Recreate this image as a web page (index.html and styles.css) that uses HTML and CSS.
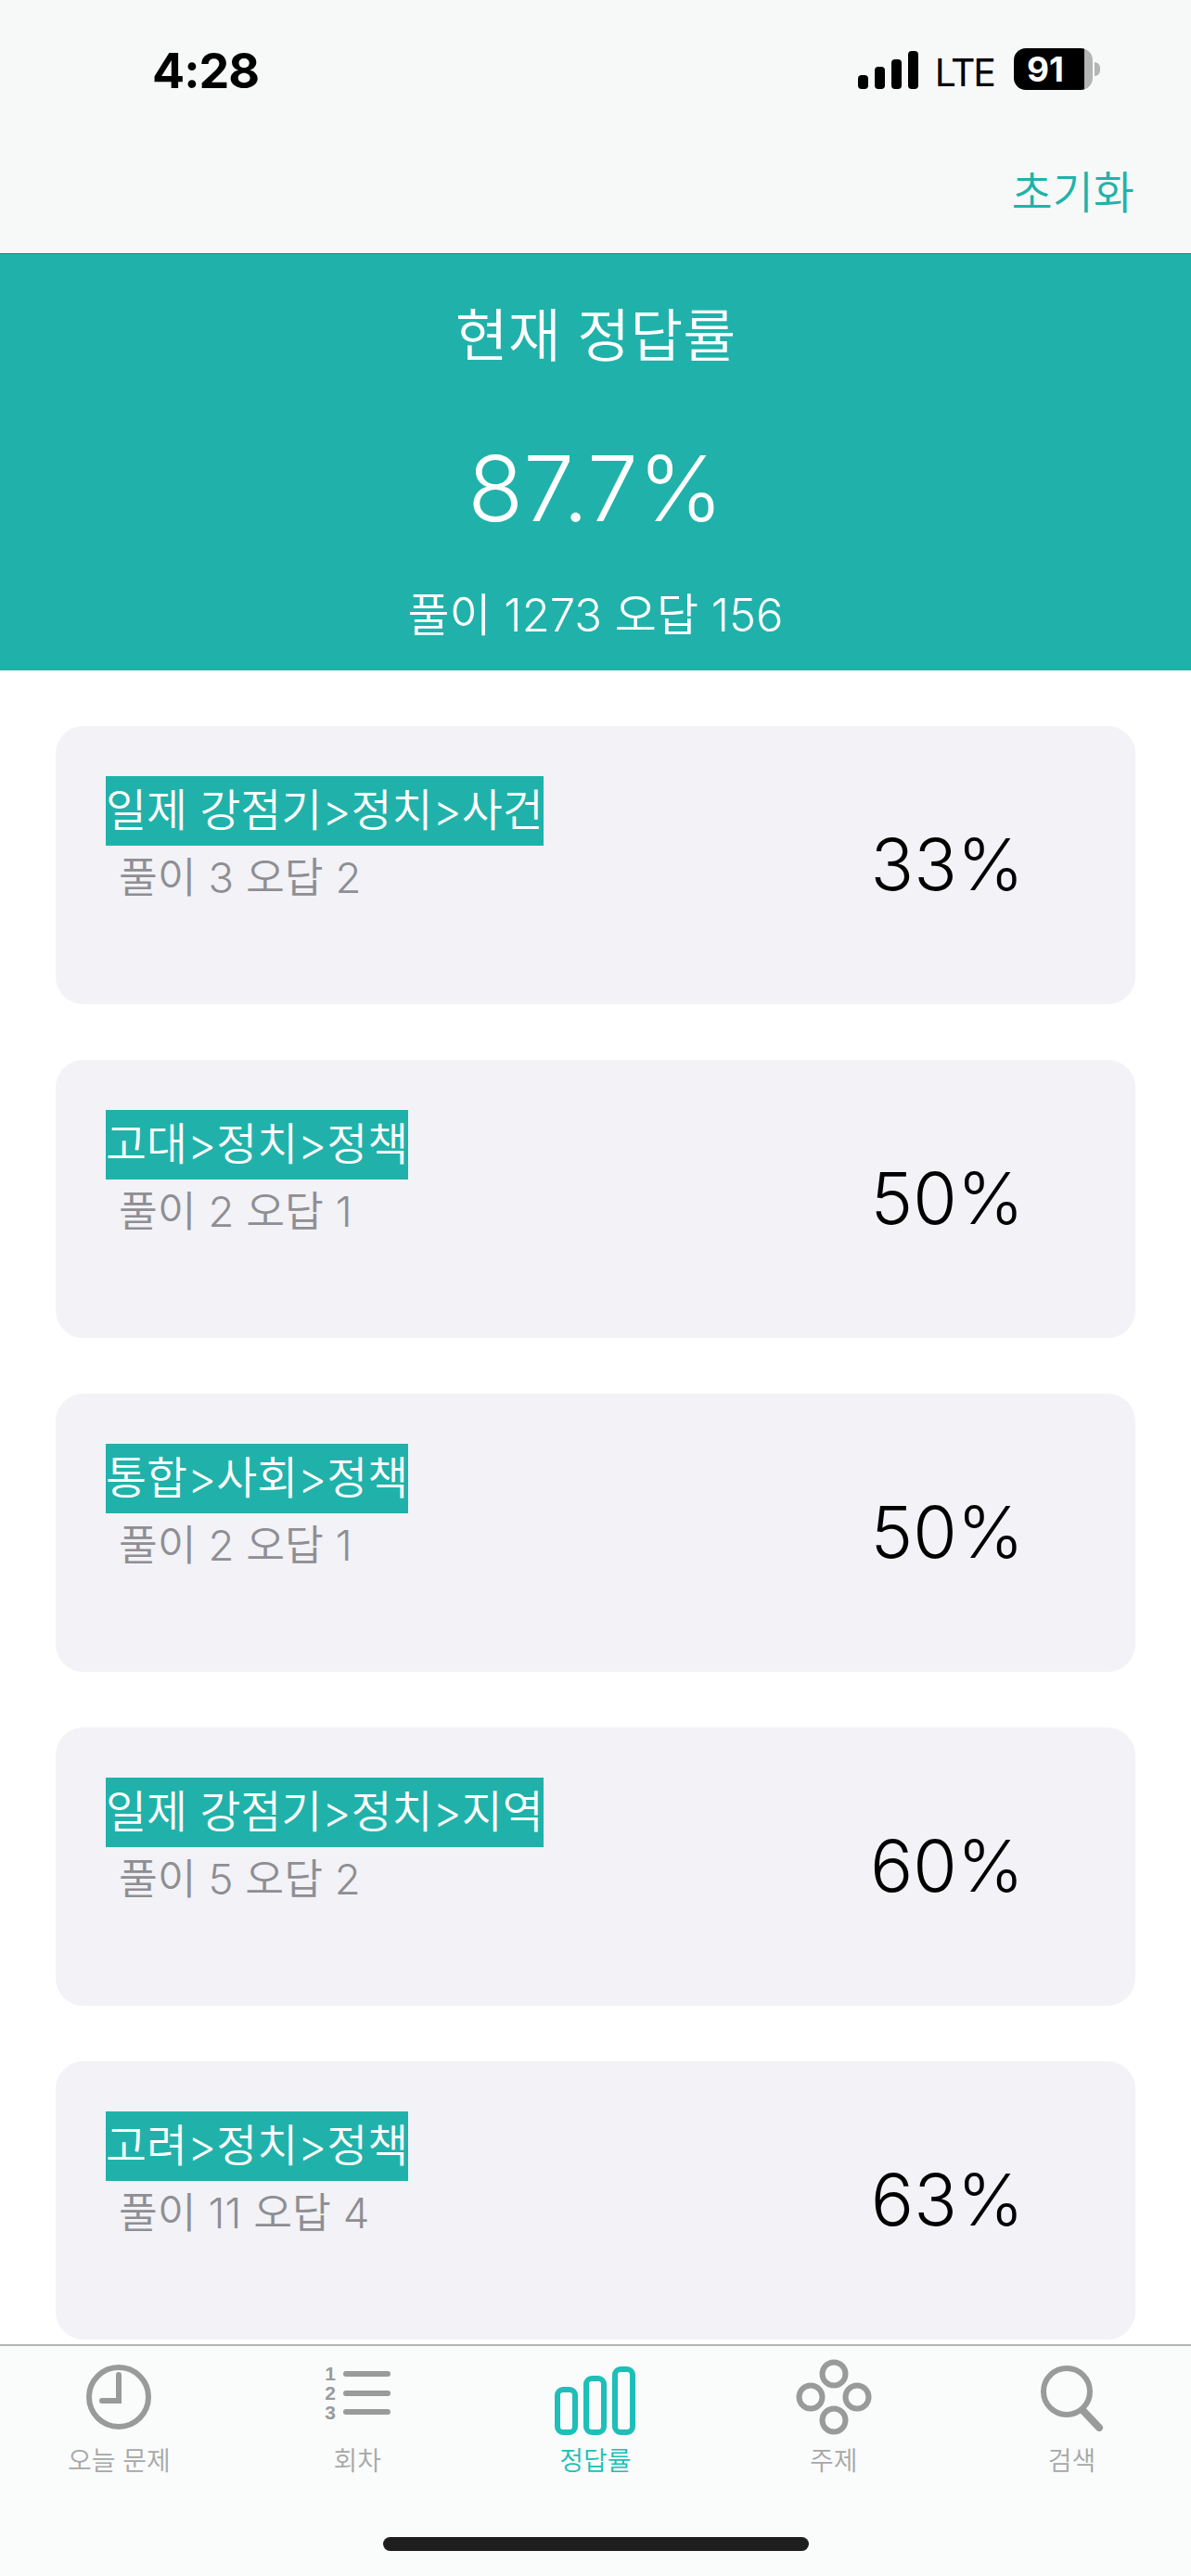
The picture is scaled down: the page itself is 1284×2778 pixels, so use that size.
FILE: index.html
```html
<!DOCTYPE html>
<html>
	<head>
		<meta charset="UTF-8">
		<title>정답률</title>
		<link rel="stylesheet" href="styles.css">
	</head>
	<body>
		<div class="app">
			<div class="topBar">
				<div class="status">
					<span class="time">4:28</span>
					<div class="statusRight">
						<div class="signal"><i></i><i></i><i></i><i></i></div>
						<span class="lte">LTE</span>
						<div class="battery"><span class="batteryNum">91</span></div>
						<div class="batteryNub"></div>
					</div>
				</div>
				<div class="nav"><a class="reset" href="javascript:;">초기화</a></div>
			</div>

			<div class="hero">
				<div class="heroTitle">현재 정답률</div>
				<div class="heroRate">87.7%</div>
				<div class="heroCount">풀이 1273 오답 156</div>
			</div>

			<div class="list">
				<div class="card">
					<div class="cardLeft">
						<span class="tag">일제 강점기&gt;정치&gt;사건</span>
						<span class="count">풀이 3 오답 2</span>
					</div>
					<div class="rate">33%</div>
				</div>
				<div class="card">
					<div class="cardLeft">
						<span class="tag">고대&gt;정치&gt;정책</span>
						<span class="count">풀이 2 오답 1</span>
					</div>
					<div class="rate">50%</div>
				</div>
				<div class="card">
					<div class="cardLeft">
						<span class="tag">통합&gt;사회&gt;정책</span>
						<span class="count">풀이 2 오답 1</span>
					</div>
					<div class="rate">50%</div>
				</div>
				<div class="card">
					<div class="cardLeft">
						<span class="tag">일제 강점기&gt;정치&gt;지역</span>
						<span class="count">풀이 5 오답 2</span>
					</div>
					<div class="rate">60%</div>
				</div>
				<div class="card">
					<div class="cardLeft">
						<span class="tag">고려&gt;정치&gt;정책</span>
						<span class="count">풀이 11 오답 4</span>
					</div>
					<div class="rate">63%</div>
				</div>
			</div>

			<div class="tabBar">
				<div class="tabs">
					<a class="tab">
						<svg class="tabIcon" viewBox="0 0 100 84" fill="none" stroke="#999b9b" stroke-width="6" stroke-linecap="round">
							<circle cx="50" cy="42" r="32"/>
							<path d="M50 18V46H32"/>
						</svg>
						<span>오늘 문제</span>
					</a>
					<a class="tab">
						<svg class="tabIcon" viewBox="0 0 100 84" fill="none" stroke="#999b9b" stroke-width="6" stroke-linecap="round">
							<text class="listNum" x="21" y="24">1</text>
							<text class="listNum" x="21" y="45">2</text>
							<text class="listNum" x="21" y="66">3</text>
							<path d="M38 17H83M38 38H83M38 58H83"/>
						</svg>
						<span>회차</span>
					</a>
					<a class="tab on">
						<svg class="tabIcon" viewBox="0 0 100 84" fill="none" stroke="#1dbfb8" stroke-width="6">
							<rect x="9" y="34" width="19" height="46" rx="6"/>
							<rect x="40" y="22" width="19" height="58" rx="6"/>
							<rect x="71" y="12" width="19" height="68" rx="6"/>
						</svg>
						<span>정답률</span>
					</a>
					<a class="tab">
						<svg class="tabIcon" viewBox="0 0 100 84" fill="none" stroke="#999b9b" stroke-width="6">
							<circle cx="50" cy="17" r="12.5"/>
							<circle cx="25" cy="42" r="12.5"/>
							<circle cx="75" cy="42" r="12.5"/>
							<circle cx="50" cy="67" r="12.5"/>
						</svg>
						<span>주제</span>
					</a>
					<a class="tab">
						<svg class="tabIcon" viewBox="0 0 100 84" fill="none" stroke="#999b9b" stroke-width="6" stroke-linecap="round">
							<circle cx="44" cy="36" r="25"/>
							<path d="M61 56L79 75" stroke-width="8"/>
						</svg>
						<span>검색</span>
					</a>
				</div>
				<div class="homeBar"></div>
			</div>
		</div>
	</body>
</html>
```

FILE: styles.css
```css
*{
	margin: 0;
	padding: 0;
	box-sizing: border-box;
}
body{
	font-family: Inter, "Noto Sans CJK KR", sans-serif;
	font-weight: 350;
	background: #fff;
}
.app{
	height: 2778px;
	display: flex;
	flex-direction: column;
	overflow: hidden;
}
.topBar{
	height: 274px;
	flex: none;
	background: #f7f9f9;
	border-bottom: 1px solid #1a8a84;
}
.status{
	display: flex;
	justify-content: space-between;
	padding: 50px 98px 0 164px;
	height: 110px;
}
.time{
	font-size: 52px;
	font-weight: 700;
	line-height: 53px;
	letter-spacing: -1px;
	color: #000;
}
.statusRight{
	display: flex;
	align-items: flex-end;
	height: 47px;
}
.signal{
	display: flex;
	align-items: flex-end;
	gap: 7px;
	height: 41px;
	margin: 0 18px 1px 0;
}
.signal i{
	display: block;
	width: 11px;
	border-radius: 4px;
	background: #000;
}
.signal i:nth-child(1){ height: 15px; }
.signal i:nth-child(2){ height: 24px; }
.signal i:nth-child(3){ height: 32px; }
.signal i:nth-child(4){ height: 41px; }
.lte{
	font-size: 41px;
	font-weight: 400;
	line-height: 38px;
	letter-spacing: -2px;
	color: #000;
	margin-right: 21px;
}
.battery{
	width: 85px;
	height: 45px;
	border-radius: 13px;
	background: linear-gradient(to right, #000 76px, #b3b4b4 76px);
	display: flex;
	align-items: center;
	padding-left: 14px;
}
.batteryNum{
	font-size: 37px;
	font-weight: 700;
	color: #fff;
}
.batteryNub{
	width: 6px;
	height: 15px;
	margin: 0 0 15px 2px;
	border-radius: 0 8px 8px 0;
	background: #b3b4b4;
}
.nav{
	display: flex;
	justify-content: flex-end;
	padding: 63px 61px 0 0;
}
.reset{
	font-size: 48px;
	line-height: 70px;
	color: #20b2aa;
	text-decoration: none;
}
.hero{
	height: 449px;
	flex: none;
	background: #20b2aa;
	color: #fff;
	text-align: center;
	padding-top: 49px;
}
.heroTitle{
	font-size: 62px;
	line-height: 80px;
}
.heroRate{
	font-size: 98px;
	line-height: 120px;
	margin-top: 64px;
}
.heroCount{
	font-size: 49px;
	line-height: 70px;
	margin-top: 42px;
}
.list{
	flex: 1;
	overflow: hidden;
	padding: 60px 60px 0;
	display: flex;
	flex-direction: column;
	gap: 60px;
}
.card{
	height: 300px;
	flex: none;
	background: #f2f2f7;
	border-radius: 30px;
	display: flex;
	justify-content: space-between;
	padding: 54px 120px 0 54px;
}
.cardLeft{
	display: flex;
	flex-direction: column;
	align-items: flex-start;
}
.tag{
	height: 75px;
	line-height: 75px;
	font-size: 47.8px;
	color: #fff;
	background: #20b2aa;
	white-space: nowrap;
}
.count{
	font-size: 45.5px;
	line-height: 70px;
	color: #8e8e93;
	margin-left: 14px;
}
.rate{
	font-size: 77px;
	line-height: 100px;
	color: #000;
	margin-top: 45px;
}
.tabBar{
	height: 250px;
	flex: none;
	background: #fafbfb;
	border-top: 2px solid #b4b4b4;
}
.tabs{
	display: grid;
	grid-template-columns: repeat(5, 1fr);
	padding-top: 13px;
}
.tab{
	display: flex;
	flex-direction: column;
	align-items: center;
	font-size: 28px;
	line-height: 40px;
	color: #a6a8a8;
}
.tab.on{
	color: #1dbfb8;
}
.tabIcon{
	width: 100px;
	height: 84px;
	margin-bottom: 7px;
}
.listNum{
	font-family: "Liberation Sans", sans-serif;
	font-size: 21px;
	font-weight: 700;
	fill: #999b9b;
	stroke: none;
	text-anchor: middle;
}
.homeBar{
	width: 459px;
	height: 15px;
	margin: 62px auto 0;
	border-radius: 8px;
	background: #1e1e1e;
}
```
